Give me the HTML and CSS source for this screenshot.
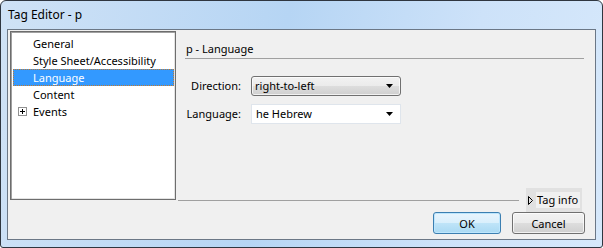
FILE: index.html
```html
<!DOCTYPE html>
<html lang="en">
  <head>
    <meta charset="UTF-8" />
    <meta name="viewport" content="width=device-width, initial-scale=1.0" />
    <title>Tag Editor - p</title>
    <link rel="stylesheet" href="styles.css">
  </head>
  <body>
    <div class="window">
      <div class="titlebar">Tag Editor - p</div>

      <div class="client">
        <div class="main">
          <!-- category tree -->
          <div class="tree">
            <div class="item">General</div>
            <div class="item">Style Sheet/Accessibility</div>
            <div class="item selected">Language</div>
            <div class="item">Content</div>
            <div class="item"><span class="expander"></span>Events</div>
          </div>

          <!-- property page -->
          <div class="panel">
            <div class="panel-title">p - Language</div>

            <div class="fields">
              <label class="field-label">Direction:</label>
              <div class="combo combo-button">right-to-left<span class="arrow"></span></div>

              <label class="field-label">Language:</label>
              <div class="combo combo-edit">he Hebrew<span class="arrow"></span></div>
            </div>

            <div class="panel-foot">
              <div class="separator"></div>
              <div class="tag-info">
                <svg class="disclosure" width="5" height="9" viewBox="0 0 5 9">
                  <path d="M0.5 0.5 L4.5 4.5 L0.5 8.5 Z" fill="none" stroke="#000" stroke-width="1" />
                </svg>
                <span class="tag-info-label">Tag info</span>
              </div>
            </div>
          </div>
        </div>

        <div class="buttons">
          <button class="btn btn-default">OK</button>
          <button class="btn btn-cancel">Cancel</button>
        </div>
      </div>
    </div>
  </body>
</html>
```

FILE: styles.css
```css
/* Page */
body {
  margin: 0;
  background-color: #ffffff;
  font-family: "Noto Sans", "Open Sans", sans-serif;
  font-size: 11px;
  color: #000;
}

/* Window frame */
.window {
  width: 603px;
  height: 248px;
  box-sizing: border-box;
  border: 1px solid #2f3640;
  border-radius: 6px 6px 3px 3px;
  padding: 0 6px 7px 6px;
  display: flex;
  flex-direction: column;
  background: linear-gradient(100deg, #cfe2f6 0%, #b6d5f4 45%, #cde2f9 75%, #d6e8fb 100%);
}

.titlebar {
  height: 28px;
  line-height: 28px;
  font-size: 12px;
  padding-left: 1px;
}

.client {
  flex: 1;
  border: 1px solid #6b7786;
  background-color: #f0f0f0;
  display: flex;
  flex-direction: column;
}

.main {
  display: flex;
  align-items: flex-start;
  height: 182px;
}

/* Tree list */
.tree {
  width: 166px;
  height: 169px;
  margin: 1px 0 0 2px;
  box-sizing: border-box;
  border: 1px solid #6d6d6d;
  box-shadow: inset 1px 1px 0 #a0a0a0, inset -1px -1px 0 #e3e3e3;
  background-color: #ffffff;
  padding: 3px 1px 0 2px;
}

.item {
  height: 17px;
  line-height: 15px;
  box-sizing: border-box;
  border: 1px dotted transparent;
  padding-left: 19px;
  display: flex;
  align-items: center;
  white-space: nowrap;
}

.item.selected {
  background-color: #3399ff;
  color: #ffffff;
  border-color: #c27a2e;
}

.expander {
  width: 9px;
  height: 9px;
  box-sizing: border-box;
  border: 1px solid #919191;
  margin-left: -15px;
  margin-right: 6px;
  position: relative;
  background-color: #fff;
}

.expander::before,
.expander::after {
  content: "";
  position: absolute;
  background-color: #000;
}

.expander::before {
  left: 1px;
  top: 3px;
  width: 5px;
  height: 1px;
}

.expander::after {
  left: 3px;
  top: 1px;
  width: 1px;
  height: 5px;
}

/* Property panel */
.panel {
  flex: 1;
  height: 182px;
  margin-left: 2px;
  padding-right: 11px;
  display: flex;
  flex-direction: column;
}

.panel-title {
  margin-left: 7px;
  padding: 11px 0 1px 1px;
  line-height: 16px;
  border-bottom: 1px solid #a0a0a0;
}

.fields {
  margin: 17px 0 0 7px;
  display: grid;
  grid-template-columns: 56px 150px;
  grid-auto-rows: 20px;
  column-gap: 10px;
  row-gap: 8px;
}

.field-label {
  text-align: right;
  line-height: 20px;
}

.combo {
  position: relative;
  height: 20px;
  box-sizing: border-box;
  line-height: 18px;
}

.combo-button {
  border: 1px solid #707070;
  border-radius: 3px;
  padding-left: 3px;
  background: linear-gradient(#f2f2f2 0%, #ebebeb 50%, #dddddd 51%, #cfcfcf 100%);
  box-shadow: inset 0 0 0 1px rgba(255, 255, 255, 0.7);
}

.combo-edit {
  border: 1px solid #dfe5ec;
  padding-left: 4px;
  background-color: #ffffff;
}

.arrow {
  position: absolute;
  right: 7px;
  top: 7px;
  width: 7px;
  height: 4px;
  background-color: #000;
  clip-path: polygon(0 0, 100% 0, 50% 100%);
}

/* Separator + tag info toggle */
.panel-foot {
  margin-top: auto;
  margin-right: 2px;
  height: 24px;
  display: flex;
}

.separator {
  flex: 1;
  height: 1px;
  margin-top: 12px;
  margin-right: 7px;
  background-color: #a0a0a0;
}

.tag-info {
  width: 56px;
  height: 24px;
  background-color: #e1e1e1;
  display: flex;
  align-items: center;
  padding-left: 2px;
  box-sizing: border-box;
  white-space: nowrap;
}

.disclosure {
  display: block;
  flex-shrink: 0;
  margin-top: 1px;
}

.tag-info-label {
  margin-left: 3px;
  padding: 0 2px 0 1px;
  line-height: 16px;
  background-color: #f0f0f0;
}

/* Dialog buttons */
.buttons {
  display: flex;
  justify-content: flex-end;
  gap: 11px;
  padding-right: 10px;
}

.btn {
  height: 22px;
  box-sizing: border-box;
  border-radius: 3px;
  font-family: inherit;
  font-size: 11px;
  color: #000;
  padding: 0;
}

.btn-default {
  width: 68px;
  border: 1px solid #3c7fb1;
  background: linear-gradient(#e9f5fd 0%, #d9effc 50%, #bfe4f8 51%, #a9d9f3 100%);
  box-shadow: inset 0 0 0 1px #bde6fd;
}

.btn-cancel {
  width: 73px;
  border: 1px solid #707070;
  background: linear-gradient(#f2f2f2 0%, #ebebeb 50%, #dddddd 51%, #cfcfcf 100%);
  box-shadow: inset 0 0 0 1px rgba(255, 255, 255, 0.7);
}
```
